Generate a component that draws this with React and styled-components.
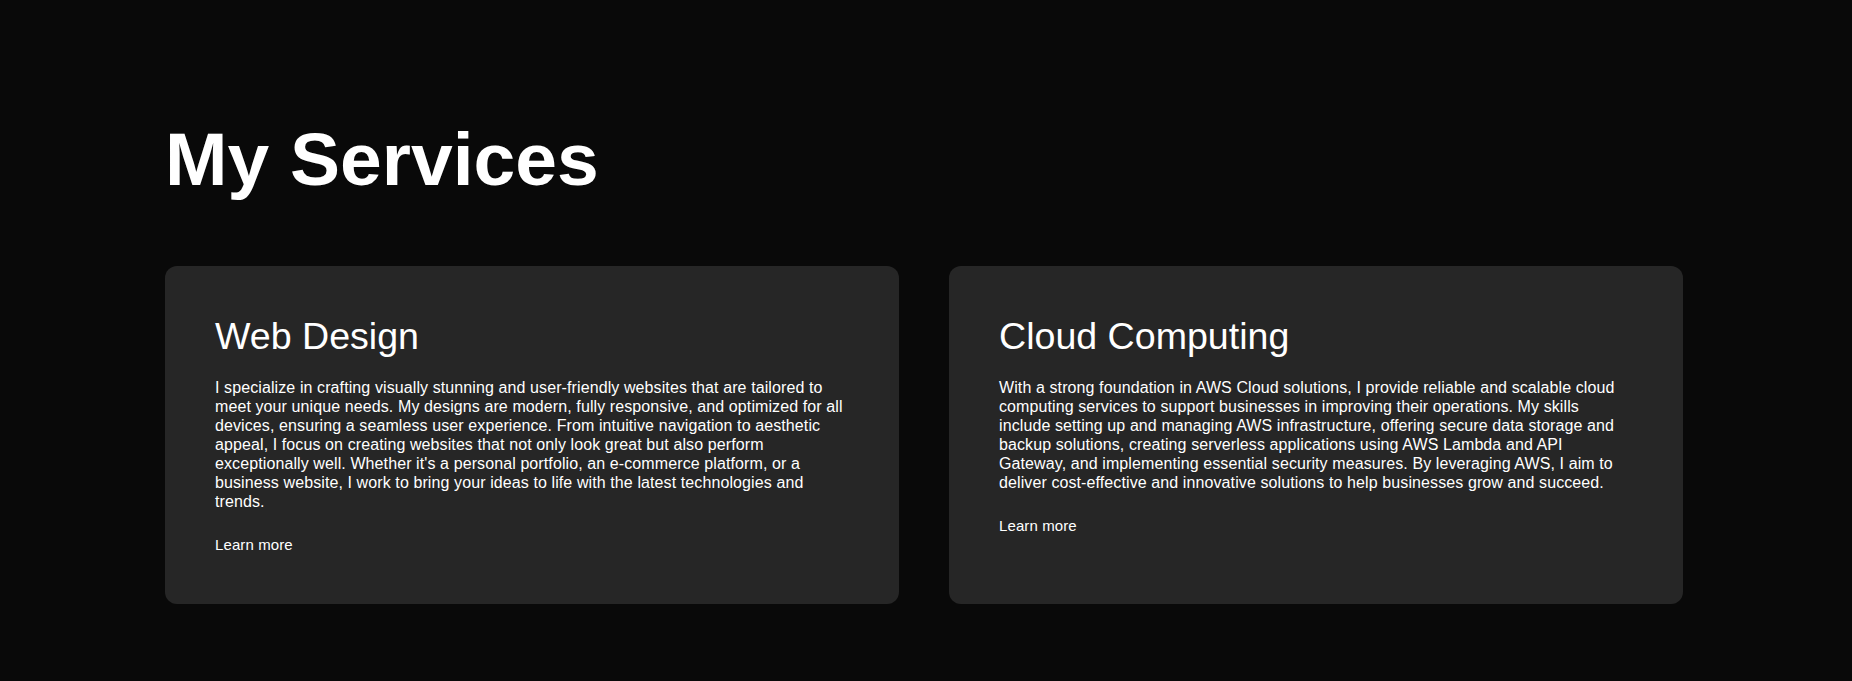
import React from 'react';
import styled, { createGlobalStyle } from 'styled-components';

const services = [
  {
    title: 'Web Design',
    text: "I specialize in crafting visually stunning and user-friendly websites that are tailored to meet your unique needs. My designs are modern, fully responsive, and optimized for all devices, ensuring a seamless user experience. From intuitive navigation to aesthetic appeal, I focus on creating websites that not only look great but also perform exceptionally well. Whether it's a personal portfolio, an e-commerce platform, or a business website, I work to bring your ideas to life with the latest technologies and trends.",
  },
  {
    title: 'Cloud Computing',
    text: 'With a strong foundation in AWS Cloud solutions, I provide reliable and scalable cloud computing services to support businesses in improving their operations. My skills include setting up and managing AWS infrastructure, offering secure data storage and backup solutions, creating serverless applications using AWS Lambda and API Gateway, and implementing essential security measures. By leveraging AWS, I aim to deliver cost-effective and innovative solutions to help businesses grow and succeed.',
  },
];

const App = () => {
  return (
    <>
      <GlobalStyle />
      <StyledServices>
        <Title>My Services</Title>
        <CardGrid>
          {services.map((service) => (
            <Card key={service.title}>
              <CardTitle>{service.title}</CardTitle>
              <CardText>{service.text}</CardText>
              <LearnMore href="#">Learn more</LearnMore>
            </Card>
          ))}
        </CardGrid>
      </StyledServices>
    </>
  );
};

const GlobalStyle = createGlobalStyle`
  * {
    box-sizing: border-box;
  }

  body {
    margin: 0;
    background: #090909;
    color: #fff;
    font-family: 'Liberation Sans', Arial, sans-serif;
  }
`;

const StyledServices = styled.section`
  padding: 116px 169px 78px 165px;
`;

const Title = styled.h1`
  margin: 0 0 64px;
  font-size: 75px;
  font-weight: 700;
  line-height: normal;
`;

const CardGrid = styled.div`
  display: grid;
  grid-template-columns: 1fr 1fr;
  gap: 50px;
`;

const Card = styled.div`
  background: #262626;
  border-radius: 12px;
  padding: 49px 50px 50px;
`;

const CardTitle = styled.h2`
  margin: 0 0 20px;
  font-size: 37.6px;
  font-weight: 400;
  line-height: normal;
`;

const CardText = styled.p`
  margin: 0 0 25px;
  font-size: 16px;
  line-height: 19px;
  letter-spacing: 0.1px;
  max-width: 634px;
`;

const LearnMore = styled.a`
  display: inline-block;
  color: #fff;
  font-size: 15px;
  letter-spacing: 0.1px;
  text-decoration: none;
`;

export default App;
